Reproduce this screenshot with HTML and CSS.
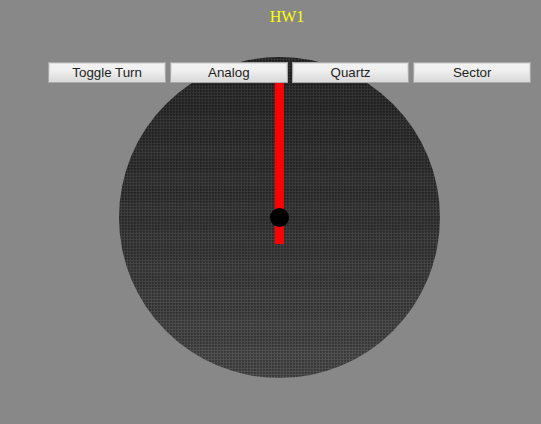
FILE: index.html
```html
<!DOCTYPE html>
<html lang="en">
<head>
    <meta charset="UTF-8">
    <title>HW1</title>
    <link rel="stylesheet" href="styles.css">
</head>
<body>
    <h1 class="title">HW1</h1>

    <div class="controls">
        <button class="btn">Toggle Turn</button>
        <button class="btn">Analog</button>
        <button class="btn">Quartz</button>
        <button class="btn">Sector</button>
    </div>

    <div class="clock">
        <div class="hand"></div>
        <div class="pivot"></div>
    </div>
</body>
</html>
```

FILE: styles.css
```css
body {
    margin: 0;
    height: 424px;
    overflow: hidden;
    background: #888;
}

.title {
    margin: 0;
    padding: 8px 0 0 33px;
    color: #ff0;
    font-family: "Liberation Serif", serif;
    font-size: 16px;
    font-weight: normal;
    line-height: 18px;
    text-align: center;
}

.controls {
    position: relative;
    z-index: 1;
    display: flex;
    gap: 4px;
    margin: 36px 0 0 48.3px;
}

.btn {
    width: 117.7px;
    height: 21px;
    padding: 0;
    border: 1px solid #a8a8a8;
    border-radius: 0;
    box-shadow: inset 0 0 0 1px #ddd;
    background: linear-gradient(#f3f3f3, #efefef 40%, #d9d9d9);
    color: #222;
    font-family: "Liberation Sans", Arial, sans-serif;
    font-size: 13.33px;
    line-height: 17px;
}

.clock {
    position: relative;
    width: 321px;
    height: 321px;
    margin: -26px 0 0 119px;
    border-radius: 50%;
    background:
        radial-gradient(circle at 1px 1px, rgba(0, 0, 0, 0.22) 1px, transparent 1.5px) 0 0 / 3px 3px,
        radial-gradient(circle at 2.5px 2.5px, rgba(255, 255, 255, 0.05) 1px, transparent 1.5px) 0 0 / 3px 3px,
        repeating-linear-gradient(rgba(255, 255, 255, 0.02) 0 14px, transparent 14px 29px),
        linear-gradient(#252525, #333 50%, #4a4a4a);
}

.hand {
    position: absolute;
    top: 7px;
    left: 156px;
    width: 9px;
    height: 180px;
    background: #f00;
}

.pivot {
    position: absolute;
    top: 151px;
    left: 151px;
    width: 19px;
    height: 19px;
    border-radius: 50%;
    background: #000;
}
```
